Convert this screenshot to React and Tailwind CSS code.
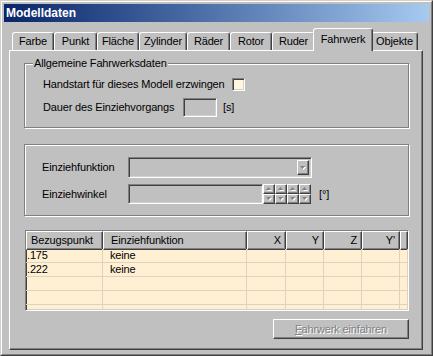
import React from 'react';

const sunken =
  'border border-t-[#808080] border-l-[#808080] border-b-white border-r-white shadow-[inset_1px_1px_0_#404040,inset_-1px_-1px_0_#d4d0c8]';
const raised =
  'border border-t-white border-l-white border-b-[#404040] border-r-[#404040] shadow-[inset_-1px_-1px_0_#808080]';
const etched = 'border border-[#808080] shadow-[inset_1px_1px_0_#fff,1px_1px_0_#fff]';

const tabs = [
  { label: 'Farbe', w: 'w-[42px]' },
  { label: 'Punkt', w: 'w-[43px]' },
  { label: 'Fläche', w: 'w-[42px]' },
  { label: 'Zylinder', w: 'w-[48px]' },
  { label: 'Räder', w: 'w-[43px]' },
  { label: 'Rotor', w: 'w-[42px]' },
  { label: 'Ruder', w: 'w-[43px]' },
  { label: 'Fahrwerk', w: 'w-[60px]', active: true },
  { label: 'Objekte', w: 'w-[47px]' },
];

const columns = [
  { label: 'Bezugspunkt', cls: 'justify-start pl-[4px]' },
  { label: 'Einziehfunktion', cls: 'justify-start pl-[7px]' },
  { label: 'X', cls: 'justify-end pr-[4px]' },
  { label: 'Y', cls: 'justify-end pr-[4px]' },
  { label: 'Z', cls: 'justify-end pr-[4px]' },
  { label: "Y'", cls: 'justify-end pr-[4px]' },
  { label: '', cls: '' },
];

const rows = [
  ['.175', 'keine'],
  ['.222', 'keine'],
  ['', ''],
  ['', ''],
  ['', ''],
];

const Arrow = ({ up }) => (
  <svg width="6" height="4" viewBox="0 0 6 4">
    {up ? (
      <>
        <polygon points="3.5,1 6,4 1,4" fill="#fff" />
        <polygon points="2.5,0 5,3 0,3" fill="#808080" />
      </>
    ) : (
      <>
        <polygon points="1,1 6,1 3.5,4" fill="#fff" />
        <polygon points="0,0 5,0 2.5,3" fill="#808080" />
      </>
    )}
  </svg>
);

const GroupBox = ({ title, className, children }) => (
  <div className={`relative ml-[14px] w-[385px] ${etched} ${className}`}>
    {title && (
      <span className="absolute left-[8px] top-[-7px] px-[1px] leading-[13px] bg-[#c0c0c0]">{title}</span>
    )}
    {children}
  </div>
);

export default function App() {
  return (
    <div className="w-[433px] h-[356px] bg-[#c0c0c0] border border-t-[#d4d0c8] border-l-[#d4d0c8] border-r-[#404040] border-b-[#404040] font-['Liberation_Sans',Arial,sans-serif] text-[11px] tracking-[-0.15px] text-black">
      <div className="h-full flex flex-col p-[2px] border border-t-white border-l-white border-r-[#808080] border-b-[#808080]">
        {/* Title bar */}
        <div className="h-[18px] flex items-center pl-[2px] bg-linear-to-r from-[#0a246a] to-[#a6caf0] text-white text-[12px] tracking-normal font-bold">
          Modelldaten
        </div>

        {/* Tabs */}
        <div className="mt-[6px] h-[22px] flex items-end pl-[8px]">
          {tabs.map((t) =>
            t.active ? (
              <div
                key={t.label}
                className={`${t.w} relative z-10 -mx-[2px] -mb-[1px] h-[23px] flex items-center justify-center pb-[2px] bg-[#c0c0c0] rounded-t-[3px] border-t border-l border-r border-t-white border-l-white border-r-[#404040] shadow-[inset_-1px_0_0_#808080]`}
              >
                {t.label}
              </div>
            ) : (
              <div
                key={t.label}
                className={`${t.w} h-[18px] flex items-center justify-center rounded-t-[3px] border-t border-l border-r border-t-white border-l-white border-r-[#404040] shadow-[inset_-1px_0_0_#808080]`}
              >
                {t.label}
              </div>
            )
          )}
        </div>

        {/* Tab page */}
        <div className="ml-[5px] w-[414px] h-[300px] flex flex-col border border-t-white border-l-white border-r-[#404040] border-b-[#404040] shadow-[inset_-1px_-1px_0_#808080]">
          <GroupBox title="Allgemeine Fahrwerksdaten" className="mt-[12px] h-[65px] pl-[18px]">
            <div className="mt-[14px] h-[13px] flex items-center">
              <span className="w-[189px]">Handstart für dieses Modell erzwingen</span>
              <div className={`w-[13px] h-[13px] bg-[#fff6e0] ${sunken}`} />
            </div>
            <div className="mt-[7px] h-[19px] flex items-center">
              <span className="w-[140px]">Dauer des Einziehvorgangs</span>
              <div className={`w-[34px] h-[19px] ${sunken}`} />
              <span className="ml-[6px]">[s]</span>
            </div>
          </GroupBox>

          <GroupBox className="mt-[16px] h-[72px] pl-[17px]">
            <div className="mt-[12px] h-[21px] flex items-center">
              <span className="w-[86px]">Einziehfunktion</span>
              <div className={`w-[184px] h-[21px] flex justify-end p-[2px] ${sunken}`}>
                <div className={`w-[12px] h-full flex items-center justify-center bg-[#c0c0c0] ${raised}`}>
                  <Arrow />
                </div>
              </div>
            </div>
            <div className="mt-[6px] h-[20px] flex items-center">
              <span className="w-[86px]">Einziehwinkel</span>
              <div className={`w-[135px] h-[20px] ${sunken}`} />
              <div className="grid grid-cols-4 grid-rows-2 w-[48px] h-[20px]">
                {[0, 1, 2, 3].map((i) => (
                  <div key={`u${i}`} className={`flex items-center justify-center ${raised}`}>
                    <Arrow up />
                  </div>
                ))}
                {[0, 1, 2, 3].map((i) => (
                  <div key={`d${i}`} className={`flex items-center justify-center ${raised}`}>
                    <Arrow />
                  </div>
                ))}
              </div>
              <span className="ml-[8px]">[°]</span>
            </div>
          </GroupBox>

          {/* List view */}
          <div className={`mt-[14px] ml-[15px] w-[384px] h-[81px] overflow-hidden bg-[#fff0d4] ${sunken}`}>
            <div className="grid grid-cols-[77px_144px_39px_38px_38px_38px_1fr] h-[18px] bg-[#c0c0c0]">
              {columns.map((c, i) => (
                <div key={i} className={`flex items-center ${c.cls} ${raised}`}>
                  {c.label}
                </div>
              ))}
            </div>
            {rows.map((r, ri) => (
              <div key={ri} className="grid grid-cols-[77px_144px_39px_38px_38px_38px_1fr] h-[14px]">
                {columns.map((c, ci) => (
                  <div
                    key={ci}
                    className={`flex items-center leading-[13px] border-r border-b border-[#ddd3bf] ${
                      ci === 0 ? 'pl-[1px]' : ci === 1 ? 'pl-[7px]' : ''
                    }`}
                  >
                    {ci < 2 ? r[ci] : ''}
                  </div>
                ))}
              </div>
            ))}
          </div>

          <button
            disabled
            className={`mt-[8px] ml-[263px] w-[136px] h-[20px] flex items-center justify-center bg-[#c0c0c0] text-[#808080] [text-shadow:1px_1px_0_#fff] ${raised}`}
          >
            <span>
              <span className="underline">F</span>ahrwerk einfahren
            </span>
          </button>
        </div>
      </div>
    </div>
  );
}
